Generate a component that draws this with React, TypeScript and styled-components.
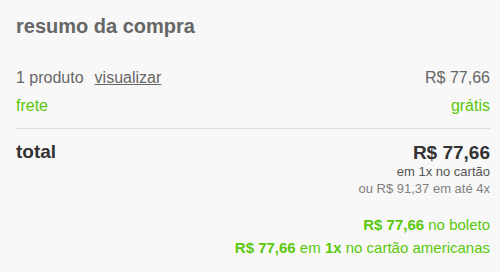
import React from 'react';
import styled, { createGlobalStyle } from 'styled-components';

const GlobalStyle = createGlobalStyle`
  html, body {
    margin: 0;
    padding: 0;
    background: #f8f8f8;
    font-family: Arial, "Liberation Sans", sans-serif;
  }
`;

const green = '#5ac80a';

const Wrapper = styled.div`
  width: 500px;
  height: 272px;
  box-sizing: border-box;
  padding: 15px 10px 0 16px;
  background: #f8f8f8;
`;

const Title = styled.h2`
  margin: 0 0 32px;
  font-size: 20px;
  line-height: 22px;
  font-weight: bold;
  color: #666;
`;

const Row = styled.div`
  display: flex;
  justify-content: space-between;
  align-items: baseline;
  font-size: 16px;
  line-height: 18px;
  color: ${(p: { green?: boolean }) => (p.green ? green : '#666')};
  margin-bottom: 10px;
`;

const Link = styled.a`
  color: #666;
  text-decoration: underline;
  margin-left: 11px;
`;

const Divider = styled.hr`
  border: 0;
  border-top: 1px solid #dcdcdc;
  margin: 13px 0 13px;
`;

const TotalRow = styled.div`
  display: flex;
  justify-content: space-between;
  align-items: flex-start;
`;

const TotalLabel = styled.div`
  font-size: 19px;
  line-height: 20px;
  font-weight: bold;
  color: #333;
`;

const Prices = styled.div`
  display: flex;
  flex-direction: column;
  align-items: flex-end;
`;

const BigPrice = styled.div`
  font-size: 19px;
  line-height: 21px;
  font-weight: bold;
  color: #333;
`;

const Small = styled.div`
  font-size: 13px;
  line-height: 17px;
  color: ${(p: { light?: boolean }) => (p.light ? '#808080' : '#555')};
`;

const Offers = styled.div`
  margin-top: 18px;
  display: flex;
  flex-direction: column;
  align-items: flex-end;
  gap: 4px;
`;

const Offer = styled.div`
  font-size: 15px;
  line-height: 19px;
  color: ${green};

  b {
    font-weight: bold;
  }
`;

const App = () => {
  return (
    <Wrapper>
      <GlobalStyle />
      <Title>resumo da compra</Title>
      <Row>
        <span>
          1 produto<Link>visualizar</Link>
        </span>
        <span>R$ 77,66</span>
      </Row>
      <Row green>
        <span>frete</span>
        <span>grátis</span>
      </Row>
      <Divider />
      <TotalRow>
        <TotalLabel>total</TotalLabel>
        <Prices>
          <BigPrice>R$ 77,66</BigPrice>
          <Small>em 1x no cartão</Small>
          <Small light>ou R$ 91,37 em até 4x</Small>
        </Prices>
      </TotalRow>
      <Offers>
        <Offer>
          <b>R$ 77,66</b> no boleto
        </Offer>
        <Offer>
          <b>R$ 77,66</b> em <b>1x</b> no cartão americanas
        </Offer>
      </Offers>
    </Wrapper>
  );
};

export default App;
